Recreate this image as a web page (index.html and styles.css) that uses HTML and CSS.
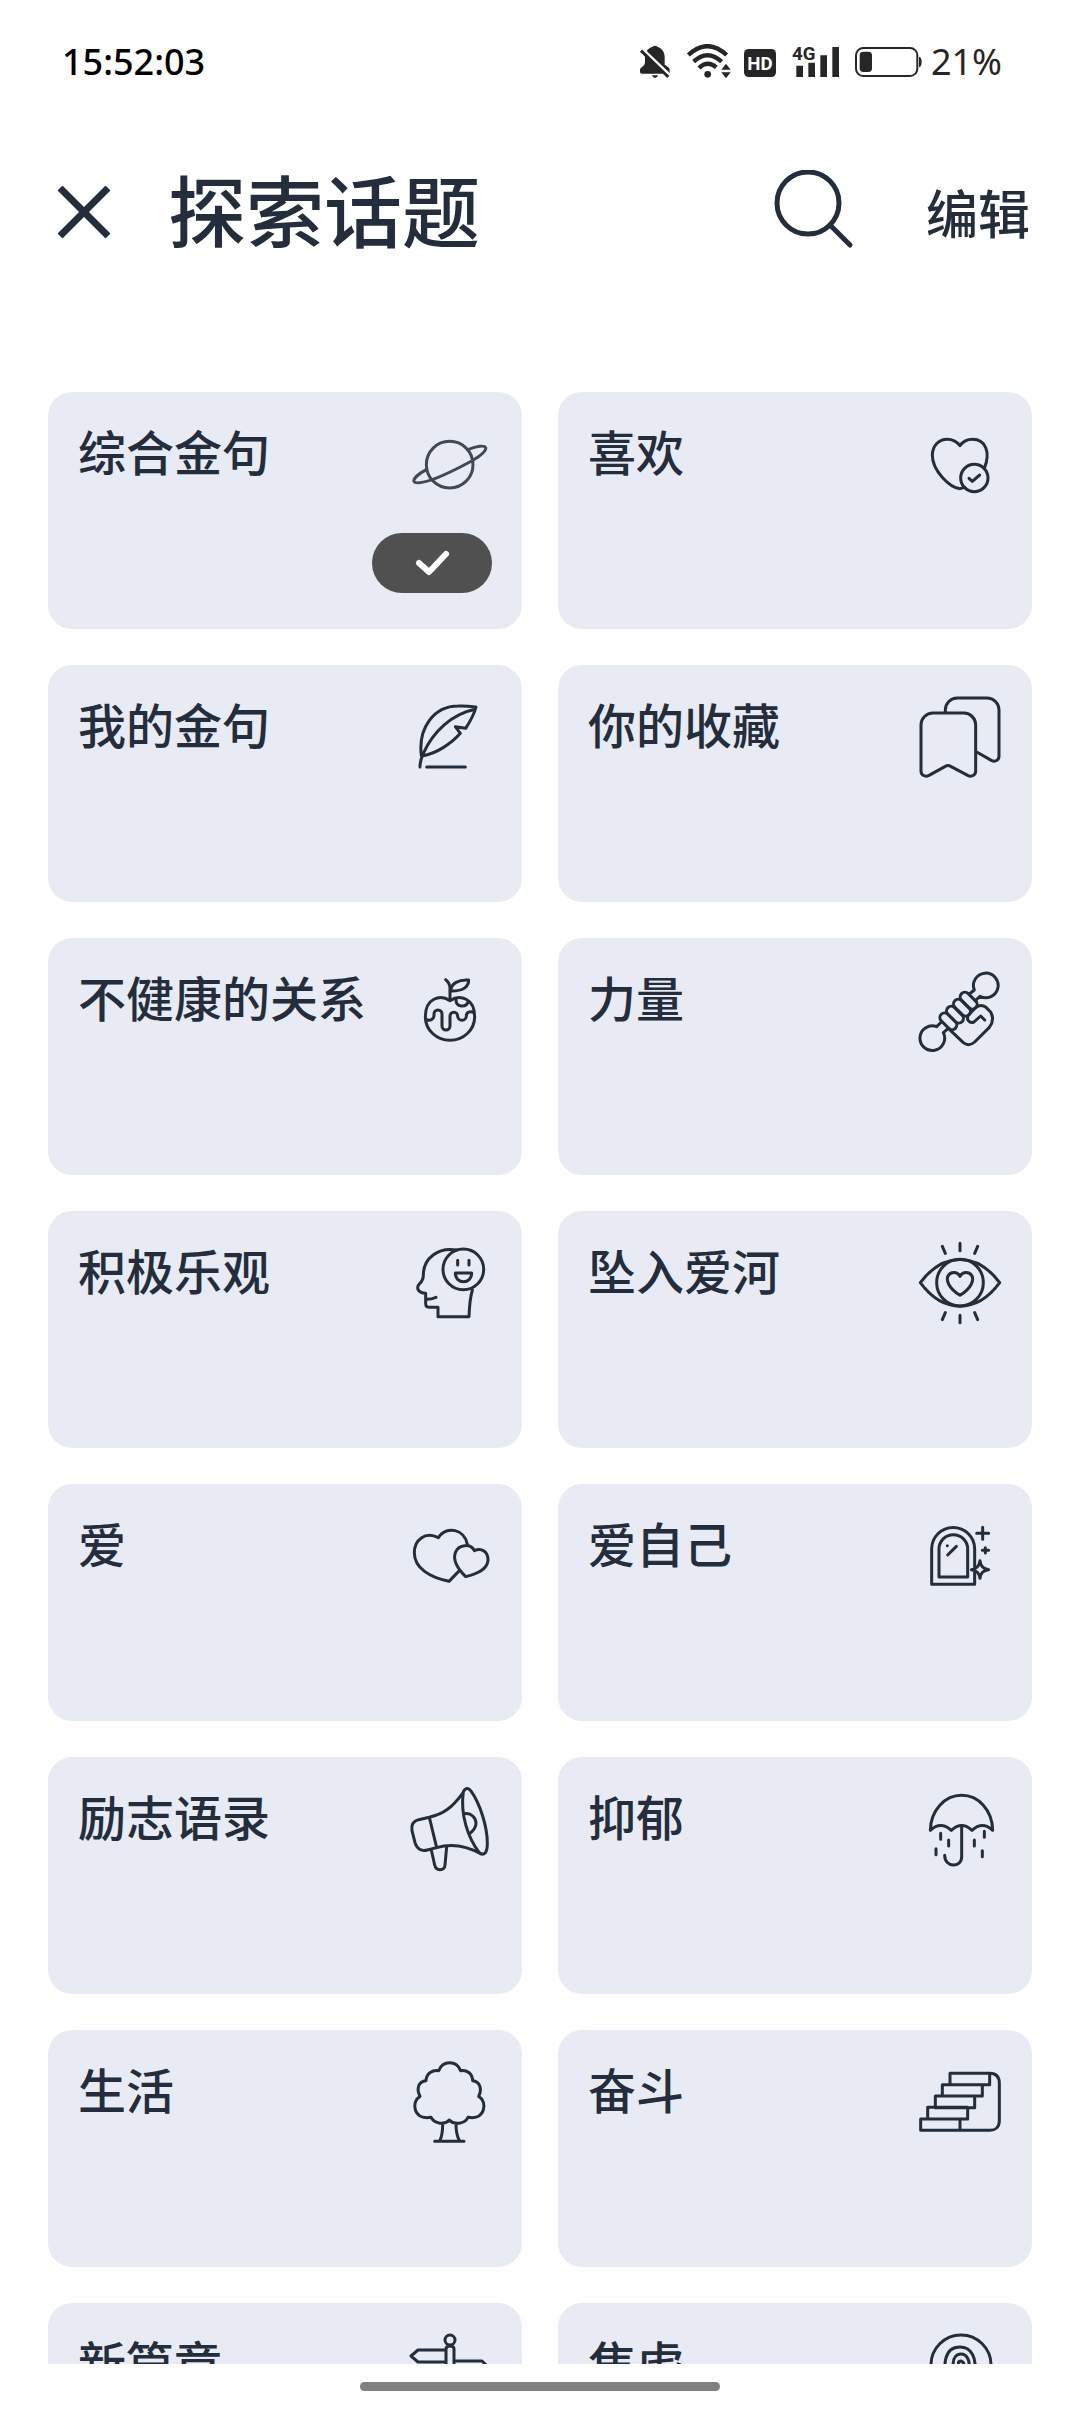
FILE: index.html
```html
<!DOCTYPE html>
<html lang="zh-CN">
<head>
<meta charset="utf-8">
<meta name="viewport" content="width=device-width, initial-scale=1">
<title>探索话题</title>
<link rel="stylesheet" href="styles.css">
</head>
<body>
<div class="status">
  <time class="status-time">15:52:03</time>
  <div class="status-icons">
    <svg width="34" height="36" viewBox="54 42 102 108" aria-hidden="true">
      <path class="solid" d="M98 50a8 6 0 0 1 14 0C128 55 134 68 134 82V104C140 109 149 111 149 120V126Q149 131 144 131H66Q60 131 60 126V119C61 111 75 110 75 96V80C77 64 84 54 98 50ZM96 136H114Q112 144 105 144Q98 144 96 136Z"/>
      <path class="knock" d="M68 58L150 136"/>
      <path class="slash" d="M63 62L145 141"/>
    </svg>
    <svg width="48" height="36" viewBox="192 42 144 108" aria-hidden="true">
      <g class="wave"><path d="M205 75Q262 22 320 75"/><path d="M221 95Q262 56 305 95"/><path d="M237 114Q262 90 289 112"/></g>
      <circle class="solid" cx="263" cy="133" r="10"/>
      <path class="solid" d="M304 119L318 101L332 119ZM304 127H332L318 145Z"/>
    </svg>
    <svg width="32" height="36" viewBox="372 42 96 108" aria-label="HD">
      <rect class="solid" x="372" y="57" width="96" height="84" rx="14"/>
      <text class="tag tag-light" x="420" y="119" text-anchor="middle">HD</text>
    </svg>
    <svg width="54" height="36" viewBox="504 42 162 108" aria-label="4G">
      <text class="tag" x="516" y="90">4G</text>
      <path class="solid" d="M529 107h20v34h-20ZM565 98h20v43h-20ZM601 76h20v65h-20ZM637 51h20v90h-20Z"/>
    </svg>
    <div class="battery">
      <svg width="69" height="36" viewBox="702 42 207 108" aria-hidden="true">
        <rect class="case" x="708" y="54" width="184" height="84" rx="22"/>
        <rect class="solid" x="719" y="65" width="37" height="61" rx="11"/>
        <path class="solid" d="M897 80q8 2 8 16t-8 16Z"/>
      </svg>
      <span>21%</span>
    </div>
  </div>
</div>

<header class="header">
  <button class="icon-button" aria-label="关闭">
    <svg width="52" height="52" viewBox="0 0 52 52"><path class="close" d="M2 2L50 50M50 2L2 50"/></svg>
  </button>
  <h1 class="title">探索话题</h1>
  <button class="icon-button search" aria-label="搜索">
    <svg width="80" height="80" viewBox="0 0 80 80"><circle class="lens" cx="34" cy="33" r="31"/><path class="lens" d="M56 55L76 75"/></svg>
  </button>
  <button class="edit">编辑</button>
</header>

<main class="topics">
  <button class="card" aria-pressed="true">
    <span class="label">综合金句</span>
    <svg class="icon faint" viewBox="60 36 300 300"><circle cx="209" cy="194" r="70"/><path d="M264 149C290 138 314 135 317 143C321 156 290 174 275 183C240 202 205 221 157 239C135 246 106 253 102 244C99 236 118 220 140 208"/></svg>
    <span class="pill"><svg width="120" height="60" viewBox="0 0 120 60"><path class="tick" d="M47 30L57 39L74 21"/></svg></span>
  </button>
  <button class="card">
    <span class="label">喜欢</span>
    <svg class="icon" viewBox="90 36 300 300"><circle cx="283" cy="234" r="41"/><path d="M313 205C332 158 318 118 277 118C262 118 248 126 240 137C231 126 217 118 202 118C176 118 157 138 157 166C157 212 210 264 240 266L254 262M267 235L277 244L299 225"/></svg>
  </button>
  <button class="card">
    <span class="label">我的金句</span>
    <svg class="icon" viewBox="60 45 300 300"><path d="M120 291C120 272 124 263 130 250C160 185 215 132 286 118M124 257C114 175 160 108 235 108C260 107 280 110 288 111C282 135 270 155 257 175L226 170L241 190C215 220 170 250 130 257M140 291H256"/></svg>
  </button>
  <button class="card">
    <span class="label">你的收藏</span>
    <svg class="icon" viewBox="90 45 300 300"><path d="M123 303V165A36 36 0 0 1 159 129H252A36 36 0 0 1 287 165V303C287 316 275 322 263 316L212 289Q204 284 196 289L147 316C135 322 123 316 123 303ZM196 126V120A36 36 0 0 1 232 84H321A36 36 0 0 1 357 120V258C357 271 346 277 334 271L290 246"/></svg>
  </button>
  <button class="card">
    <span class="label">不健康的关系</span>
    <svg class="icon" viewBox="60 864 300 300"><path d="M210 992C180 972 136 985 136 1040C136 1080 170 1111 210 1111C250 1111 284 1080 284 1040C284 985 240 972 210 992V955C210 945 204 935 197 929M212 962C214 940 235 928 266 930C266 950 250 964 212 963M138 1048C150 1054 162 1048 162 1036V1032A12 12 0 0 1 186 1032V1068A12 12 0 0 0 210 1068V1038A11 11 0 0 1 233 1038A13 13 0 0 0 259 1038C259 1026 270 1022 282 1028M228 990C228 1012 258 1014 264 996"/></svg>
  </button>
  <button class="card">
    <span class="label">力量</span>
    <svg class="icon" viewBox="90 864 300 300"><path d="M268 972L283 960A37 37 0 1 1 300 979L286 992M184 1056L170 1070A37 37 0 1 0 190 1088L204 1076M208 1078L250 1118Q267 1131 284 1116L328 1072Q345 1050 332 1026L318 1012Q303 1001 288 1012L265 1036C258 1048 268 1062 282 1056L302 1038L314 1050"/><rect x="175" y="1040" width="60" height="28" rx="14" transform="rotate(45 205 1054)"/><rect x="195" y="1020" width="60" height="28" rx="14" transform="rotate(45 225 1034)"/><rect x="216" y="999" width="60" height="28" rx="14" transform="rotate(45 246 1013)"/><rect x="236" y="978" width="60" height="28" rx="14" transform="rotate(45 266 992)"/></svg>
  </button>
  <button class="card">
    <span class="label">积极乐观</span>
    <svg class="icon" viewBox="60 63 300 300"><circle cx="250" cy="178" r="61"/><path d="M233 151V165M267 151V165M226 189H275C275 224 226 224 226 189ZM230 120C175 110 130 145 130 195C130 222 113 218 113 233C113 244 126 250 137 250V281Q137 292 150 292H174V320H267C268 290 270 265 277 240M140 268Q155 268 168 262"/></svg>
  </button>
  <button class="card">
    <span class="label">坠入爱河</span>
    <svg class="icon" viewBox="90 63 300 300"><circle cx="240" cy="218" r="70"/><path d="M121 218C190 125 290 125 359 218C290 312 190 312 121 218ZM240 256C205 235 198 210 204 198C212 184 232 184 240 199C248 184 268 184 276 198C282 210 275 235 240 256ZM240 100V122M187 109L196 130M293 109L284 130M240 316V338M196 308L187 329M284 308L293 329"/></svg>
  </button>
  <button class="card">
    <span class="label">爱</span>
    <svg class="icon" viewBox="60 882 300 300"><path d="M262 1003C254 958 200 945 175 983C135 963 103 990 103 1028C103 1075 150 1102 207 1114L238 1082M257 1100C225 1068 220 1045 226 1028C236 1002 272 1000 283 1022C305 1012 324 1025 324 1050C322 1080 290 1092 257 1100Z"/></svg>
  </button>
  <button class="card">
    <span class="label">爱自己</span>
    <svg class="icon" viewBox="90 882 300 300"><path d="M155 1123V1017A64 64 0 0 1 284 1017V1123ZM177 1101V1017A43 43 0 0 1 263 1017V1101ZM202 1007V1007M203 1035L229 1009M308 952V988M290 970H326M316 1013V1029M307 1021H326M300 1052Q302 1076 326 1079Q302 1081 300 1105Q297 1081 274 1079Q297 1076 300 1052Z"/></svg>
  </button>
  <button class="card">
    <span class="label">励志语录</span>
    <svg class="icon" viewBox="60 51 300 300"><path d="M148 172C190 162 215 145 250 97M250 95C255 84 265 82 272 92C300 130 322 200 322 250C322 275 315 290 298 278C265 235 240 165 250 95M148 172L116 179C99 184 93 196 96 212L105 248C110 266 124 275 142 270L170 263ZM170 263C215 250 260 258 303 282M254 161C275 158 288 175 288 190C288 202 280 212 270 220M154 270L164 315Q167 329 180 329Q194 329 195 315L200 260"/></svg>
  </button>
  <button class="card">
    <span class="label">抑郁</span>
    <svg class="icon" viewBox="90 51 300 300"><path d="M151 211C152 150 195 106 245 106C295 106 337 150 338 211Q307 182 276 211Q245 182 214 211Q182 182 151 211ZM245 197V290C245 324 194 324 194 286M182 220V238M206 240V258M168 266V284M283 240V258M313 214V232M307 272V290"/></svg>
  </button>
  <button class="card">
    <span class="label">生活</span>
    <svg class="icon" viewBox="60 870 300 300"><path d="M176 932C188 900 230 900 242 932C260 929 277 940 278 962C298 964 308 985 296 1009C324 1025 316 1082 264 1072C254 1092 222 1096 208 1080C194 1096 164 1092 153 1072C100 1082 92 1025 120 1009C108 985 116 964 138 962C139 940 158 929 176 932ZM188 1092C188 1115 186 1130 179 1143M228 1092C228 1115 232 1132 239 1143M164 1144H252"/></svg>
  </button>
  <button class="card">
    <span class="label">奋斗</span>
    <svg class="icon" viewBox="90 870 300 300"><path d="M122 1077H240V1111H122ZM143 1042H263V1077H143ZM166 1008H284V1043H166ZM187 974H307V1008H187ZM210 940H329V974H210ZM329 940C348 940 358 950 358 970V1082C358 1102 345 1111 330 1111H240"/></svg>
  </button>
  <button class="card">
    <span class="label">新篇章</span>
    <svg class="icon small-grid" viewBox="0 0 100 100"><circle cx="50" cy="17" r="5"/><path d="M46 90V26Q46 23 50 23Q54 23 54 26V90M46 27H18L11 33L18 39H46M54 38H82L89 45L82 52H54"/></svg>
  </button>
  <button class="card">
    <span class="label">焦虑</span>
    <svg class="icon small-grid" viewBox="0 0 100 100"><circle cx="51" cy="42" r="30"/><path d="M49 42Q47 38 51 38Q56 40 54 48C50 54 44 49 43 42C43 34 47 31 51 31C57 31 60 38 59 44C57 58 47 62 39 54C32 44 34 24 50 24C62 24 66 36 65 46"/></svg>
  </button>
</main>
<div class="home"><div class="home-bar"></div></div>
</body>
</html>
```
FILE: styles.css
```css
* { box-sizing: border-box; }

body {
  margin: 0;
  height: 100vh;
  display: flex;
  flex-direction: column;
  background: #fff;
  color: #232d3b;
  font-family: "Noto Sans CJK SC", sans-serif;
  overflow: hidden;
}

button {
  margin: 0;
  padding: 0;
  border: 0;
  background: none;
  color: inherit;
  font: inherit;
  text-align: left;
}

svg { display: block; flex: none; }

.status {
  flex: none;
  height: 124px;
  padding: 0 78px 0 62px;
  display: flex;
  align-items: center;
  justify-content: space-between;
  font: 500 36px/48px "Noto Sans", sans-serif;
  color: #262626;
}
.status-time { color: #000; }
.status-icons { display: flex; align-items: center; gap: 12px; }
.battery { display: flex; align-items: center; gap: 8px; font-weight: 400; }

.solid { fill: #262626; }
.knock { fill: none; stroke: #fff; stroke-width: 9; }
.slash { fill: none; stroke: #262626; stroke-width: 9; }
.wave { fill: none; stroke: #262626; stroke-width: 13; }
.case { fill: none; stroke: #262626; stroke-width: 6; }
.tag { font: 700 56px Roboto, sans-serif; fill: #262626; }
.tag-light { fill: #fff; }

.header {
  flex: none;
  height: 176px;
  padding: 0 50px 0 58px;
  display: flex;
  align-items: center;
}
.title {
  flex: 1;
  margin: 0 0 8px 58px;
  font-size: 78px;
  line-height: 96px;
  font-weight: 500;
}
.search { margin-bottom: 4px; }
.edit {
  margin-left: 72px;
  font-size: 52px;
  line-height: 64px;
  font-weight: 500;
}
.close { fill: none; stroke: #232d3b; stroke-width: 7; }
.lens { fill: none; stroke: #232d3b; stroke-width: 5; stroke-linecap: round; }

.topics {
  flex: 1;
  min-height: 0;
  padding: 92px 48px 36px;
  display: grid;
  grid-template-columns: 1fr 1fr;
  grid-auto-rows: max-content;
  gap: 36px;
  overflow-y: auto;
  scrollbar-width: none;
}
.card {
  min-height: 237px;
  padding: 20px 22px 36px 30px;
  display: grid;
  grid-template-columns: 1fr auto;
  align-content: start;
  row-gap: 21px;
  border-radius: 24px;
  background: #e8ebf3;
}
.label {
  padding-top: 8px;
  font-size: 48px;
  line-height: 60px;
  font-weight: 500;
}
.icon {
  width: 100px;
  height: 100px;
  fill: none;
  stroke: #232d3b;
  stroke-width: 9;
  stroke-linecap: round;
  stroke-linejoin: round;
}
.faint { opacity: 0.85; }
.small-grid { stroke-width: 3; }
.pill {
  grid-column: 1 / -1;
  justify-self: end;
  margin-right: 8px;
  border-radius: 30px;
  background: #505050;
}
.tick {
  fill: none;
  stroke: #fff;
  stroke-width: 6;
  stroke-linecap: round;
  stroke-linejoin: round;
}

.home {
  flex: none;
  height: 48px;
  padding-top: 18px;
}
.home-bar {
  width: 33.333%;
  height: 9px;
  margin: 0 auto;
  border-radius: 5px;
  background: #808080;
}
```
